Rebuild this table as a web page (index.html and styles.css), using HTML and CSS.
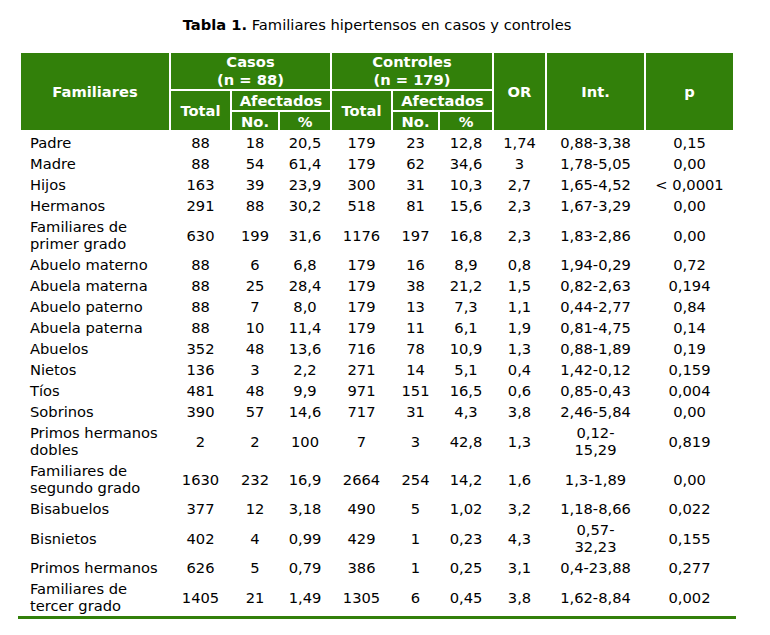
FILE: index.html
```html
<!DOCTYPE html>
<html lang="es">
<head>
<meta charset="utf-8">
<title>Tabla 1</title>
<link rel="stylesheet" href="styles.css">
</head>
<body>
<div class="wrap">
  <p class="caption"><b>Tabla 1.</b> Familiares hipertensos en casos y controles</p>
  <table class="data">
    <colgroup>
      <col class="c-fam"><col class="c-tot"><col class="c-no"><col class="c-pc">
      <col class="c-tot"><col class="c-no2"><col class="c-pc2">
      <col class="c-or"><col class="c-int"><col class="c-p">
    </colgroup>
    <thead>
      <tr class="h1">
        <th rowspan="3">Familiares</th>
        <th colspan="3">Casos<br>(n = 88)</th>
        <th colspan="3">Controles<br>(n = 179)</th>
        <th rowspan="3">OR</th>
        <th rowspan="3">Int.</th>
        <th rowspan="3">p</th>
      </tr>
      <tr class="h2">
        <th rowspan="2">Total</th>
        <th colspan="2">Afectados</th>
        <th rowspan="2">Total</th>
        <th colspan="2">Afectados</th>
      </tr>
      <tr class="h3">
        <th>No.</th><th>%</th><th>No.</th><th>%</th>
      </tr>
    </thead>
    <tbody>
      <tr><td>Padre</td><td>88</td><td>18</td><td>20,5</td><td>179</td><td>23</td><td>12,8</td><td>1,74</td><td>0,88-3,38</td><td>0,15</td></tr>
      <tr><td>Madre</td><td>88</td><td>54</td><td>61,4</td><td>179</td><td>62</td><td>34,6</td><td>3</td><td>1,78-5,05</td><td>0,00</td></tr>
      <tr><td>Hijos</td><td>163</td><td>39</td><td>23,9</td><td>300</td><td>31</td><td>10,3</td><td>2,7</td><td>1,65-4,52</td><td>&lt; 0,0001</td></tr>
      <tr><td>Hermanos</td><td>291</td><td>88</td><td>30,2</td><td>518</td><td>81</td><td>15,6</td><td>2,3</td><td>1,67-3,29</td><td>0,00</td></tr>
      <tr><td>Familiares de<br>primer grado</td><td>630</td><td>199</td><td>31,6</td><td>1176</td><td>197</td><td>16,8</td><td>2,3</td><td>1,83-2,86</td><td>0,00</td></tr>
      <tr><td>Abuelo materno</td><td>88</td><td>6</td><td>6,8</td><td>179</td><td>16</td><td>8,9</td><td>0,8</td><td>1,94-0,29</td><td>0,72</td></tr>
      <tr><td>Abuela materna</td><td>88</td><td>25</td><td>28,4</td><td>179</td><td>38</td><td>21,2</td><td>1,5</td><td>0,82-2,63</td><td>0,194</td></tr>
      <tr><td>Abuelo paterno</td><td>88</td><td>7</td><td>8,0</td><td>179</td><td>13</td><td>7,3</td><td>1,1</td><td>0,44-2,77</td><td>0,84</td></tr>
      <tr><td>Abuela paterna</td><td>88</td><td>10</td><td>11,4</td><td>179</td><td>11</td><td>6,1</td><td>1,9</td><td>0,81-4,75</td><td>0,14</td></tr>
      <tr><td>Abuelos</td><td>352</td><td>48</td><td>13,6</td><td>716</td><td>78</td><td>10,9</td><td>1,3</td><td>0,88-1,89</td><td>0,19</td></tr>
      <tr><td>Nietos</td><td>136</td><td>3</td><td>2,2</td><td>271</td><td>14</td><td>5,1</td><td>0,4</td><td>1,42-0,12</td><td>0,159</td></tr>
      <tr><td>Tíos</td><td>481</td><td>48</td><td>9,9</td><td>971</td><td>151</td><td>16,5</td><td>0,6</td><td>0,85-0,43</td><td>0,004</td></tr>
      <tr><td>Sobrinos</td><td>390</td><td>57</td><td>14,6</td><td>717</td><td>31</td><td>4,3</td><td>3,8</td><td>2,46-5,84</td><td>0,00</td></tr>
      <tr><td>Primos hermanos<br>dobles</td><td>2</td><td>2</td><td>100</td><td>7</td><td>3</td><td>42,8</td><td>1,3</td><td>0,12-<br>15,29</td><td>0,819</td></tr>
      <tr><td>Familiares de<br>segundo grado</td><td>1630</td><td>232</td><td>16,9</td><td>2664</td><td>254</td><td>14,2</td><td>1,6</td><td>1,3-1,89</td><td>0,00</td></tr>
      <tr><td>Bisabuelos</td><td>377</td><td>12</td><td>3,18</td><td>490</td><td>5</td><td>1,02</td><td>3,2</td><td>1,18-8,66</td><td>0,022</td></tr>
      <tr><td>Bisnietos</td><td>402</td><td>4</td><td>0,99</td><td>429</td><td>1</td><td>0,23</td><td>4,3</td><td>0,57-<br>32,23</td><td>0,155</td></tr>
      <tr><td>Primos hermanos</td><td>626</td><td>5</td><td>0,79</td><td>386</td><td>1</td><td>0,25</td><td>3,1</td><td>0,4-23,88</td><td>0,277</td></tr>
      <tr><td>Familiares de<br>tercer grado</td><td>1405</td><td>21</td><td>1,49</td><td>1305</td><td>6</td><td>0,45</td><td>3,8</td><td>1,62-8,84</td><td>0,002</td></tr>
    </tbody>
  </table>
</div>
</body>
</html>
```
FILE: styles.css
```css
html, body {
  margin: 0;
  padding: 0;
  background: #fff;
}
body {
  font-family: "DejaVu Sans", sans-serif;
  font-size: 14.7px;
  color: #000;
}
.wrap {
  width: 718px;
  margin-left: 18px;
}
.caption {
  margin: 0;
  padding-top: 16px;
  height: 51px;
  line-height: 18px;
  text-align: center;
  box-sizing: border-box;
}
.caption b {
  font-weight: bold;
}
.data {
  table-layout: fixed;
  width: 718px;
  border-collapse: separate;
  border-spacing: 2px;
  padding: 0 1px;
  border-bottom: 3px solid #32800a;
  box-sizing: border-box;
}
.c-fam { width: 148px; }
.c-tot { width: 59px; }
.c-no { width: 46px; }
.c-pc { width: 50px; }
.c-no2 { width: 45px; }
.c-pc2 { width: 52px; }
.c-or { width: 51px; }
.c-int { width: 97px; }
.c-p { width: 87px; }

.data th {
  background: #32800a;
  color: #fff;
  font-weight: bold;
  padding: 0;
  text-align: center;
  vertical-align: middle;
  line-height: 17px;
}
.data .h1 { height: 36px; }
.data .h1 th { line-height: 18px; }
.data .h2 { height: 19px; }
.data .h3 { height: 18px; }

.data td {
  padding: 2px 0 0;
  line-height: 17px;
  text-align: center;
  vertical-align: middle;
  white-space: nowrap;
}
.data td:first-child {
  text-align: left;
  padding-left: 9px;
}
```
